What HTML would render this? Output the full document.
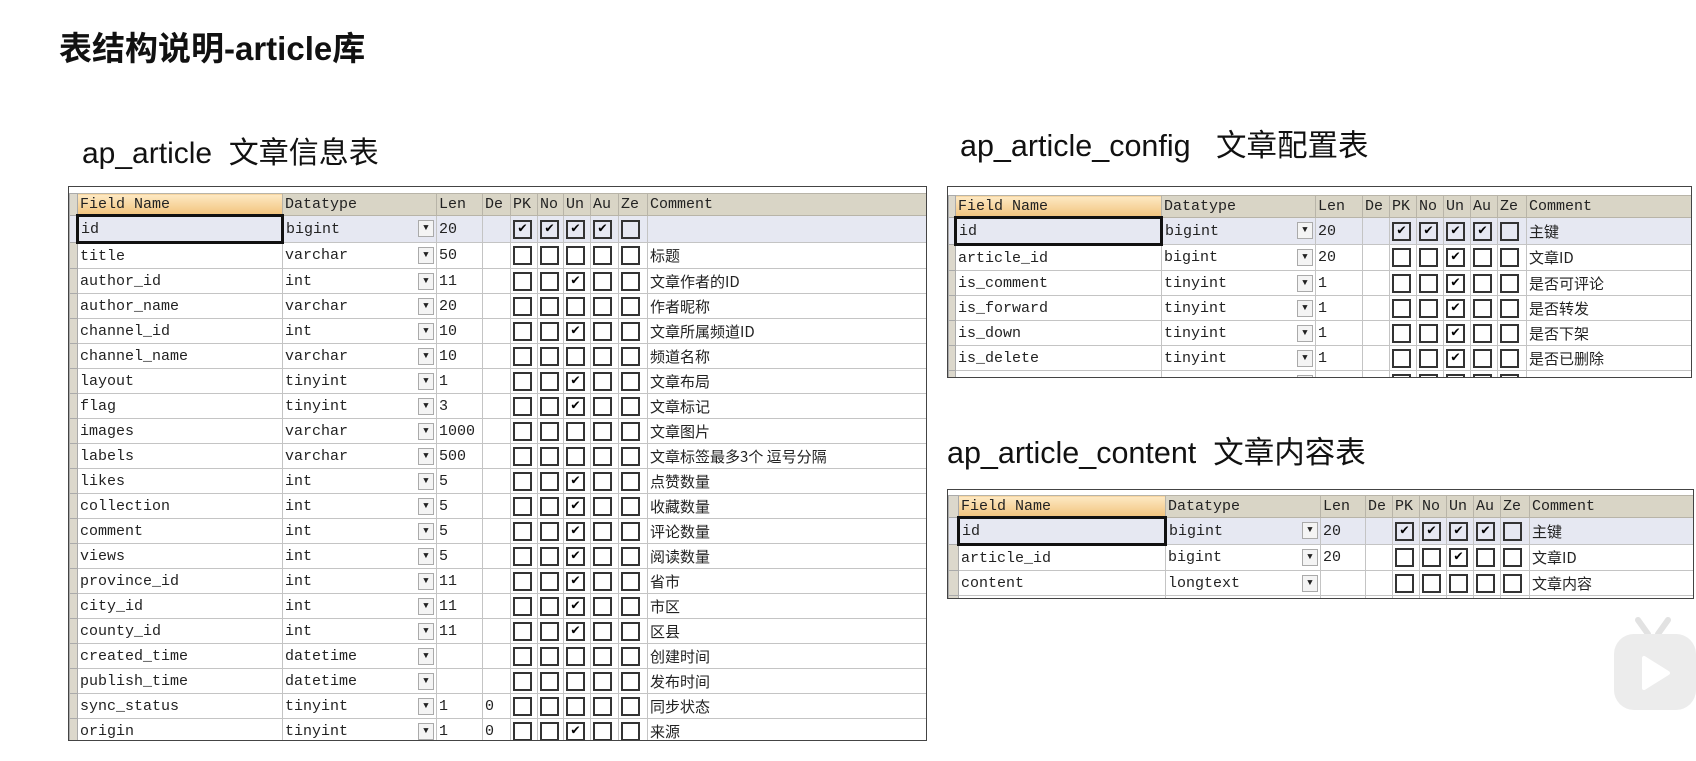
<!DOCTYPE html>
<html><head><meta charset="utf-8"><style>
body{margin:0;width:1696px;height:761px;background:#fff;position:relative;overflow:hidden;font-family:"Liberation Sans","Noto Sans CJK SC",sans-serif}
.t{position:absolute;white-space:nowrap;color:#111}
.w{position:absolute;border:1px solid #444;overflow:hidden;background:#fff}
table{border-collapse:collapse;table-layout:fixed;font:15px "Liberation Mono","Noto Sans CJK SC",monospace;color:#222;margin-top:6px}
td,th{border:1px solid #c4c4c4;height:24px;padding:0 2px;white-space:nowrap;overflow:hidden;text-align:left;font-weight:normal}
th{height:20px;background:#d9d5c6;border-color:#b8b4a8}
th.fn{background:linear-gradient(#fde9c4,#f2c47e)}
td.m,th.m{background:#dcd8cc;padding:0;border-color:#aaa}
tr.s td{background:#e6e8f2}
tr.s td.f{border:3px solid #111}
td.d{position:relative}
.ar{position:absolute;right:2px;top:4px;width:14px;height:15px;border:1px solid #aaa;background:#f4f4f4;font-size:9px;line-height:15px;text-align:center}
td.c{padding:0 0 0 2px}
.cb{display:inline-block;width:19px;height:19px;border:2px solid #333;box-sizing:border-box;vertical-align:middle;font-size:14px;line-height:15px;text-align:center;color:#000}
.cm{font-family:"Noto Sans CJK SC","Liberation Mono",monospace;font-size:15px}
</style></head><body>
<div class="t" style="left:59px;top:22px;font-size:33px;font-weight:bold">表结构说明-article库</div>
<div class="t" style="left:82px;top:128px;font-size:30px">ap_article&nbsp; 文章信息表</div>
<div class="t" style="left:960px;top:121px;font-size:30.5px">ap_article_config &nbsp; 文章配置表</div>
<div class="t" style="left:947px;top:428px;font-size:30.5px">ap_article_content&nbsp; 文章内容表</div>

<div class="w" style="left:68px;top:186px;width:857px;height:553px">
<table style="width:858px">
<colgroup><col style="width:8px"><col style="width:205px"><col style="width:154px"><col style="width:46px"><col style="width:28px"><col style="width:27px"><col style="width:26px"><col style="width:27px"><col style="width:28px"><col style="width:29px"><col></colgroup>
<tr><th class="m"></th><th class="fn">Field Name</th><th>Datatype</th><th>Len</th><th>De</th><th>PK</th><th>No</th><th>Un</th><th>Au</th><th>Ze</th><th>Comment</th></tr>
<tr class="s"><td class="m"></td><td class="f">id</td><td class="d">bigint<span class="ar">▼</span></td><td>20</td><td></td><td class="c"><span class="cb">✔</span></td><td class="c"><span class="cb">✔</span></td><td class="c"><span class="cb">✔</span></td><td class="c"><span class="cb">✔</span></td><td class="c"><span class="cb"></span></td><td class="cm"></td></tr>
<tr><td class="m"></td><td class="f">title</td><td class="d">varchar<span class="ar">▼</span></td><td>50</td><td></td><td class="c"><span class="cb"></span></td><td class="c"><span class="cb"></span></td><td class="c"><span class="cb"></span></td><td class="c"><span class="cb"></span></td><td class="c"><span class="cb"></span></td><td class="cm">标题</td></tr>
<tr><td class="m"></td><td class="f">author_id</td><td class="d">int<span class="ar">▼</span></td><td>11</td><td></td><td class="c"><span class="cb"></span></td><td class="c"><span class="cb"></span></td><td class="c"><span class="cb">✔</span></td><td class="c"><span class="cb"></span></td><td class="c"><span class="cb"></span></td><td class="cm">文章作者的ID</td></tr>
<tr><td class="m"></td><td class="f">author_name</td><td class="d">varchar<span class="ar">▼</span></td><td>20</td><td></td><td class="c"><span class="cb"></span></td><td class="c"><span class="cb"></span></td><td class="c"><span class="cb"></span></td><td class="c"><span class="cb"></span></td><td class="c"><span class="cb"></span></td><td class="cm">作者昵称</td></tr>
<tr><td class="m"></td><td class="f">channel_id</td><td class="d">int<span class="ar">▼</span></td><td>10</td><td></td><td class="c"><span class="cb"></span></td><td class="c"><span class="cb"></span></td><td class="c"><span class="cb">✔</span></td><td class="c"><span class="cb"></span></td><td class="c"><span class="cb"></span></td><td class="cm">文章所属频道ID</td></tr>
<tr><td class="m"></td><td class="f">channel_name</td><td class="d">varchar<span class="ar">▼</span></td><td>10</td><td></td><td class="c"><span class="cb"></span></td><td class="c"><span class="cb"></span></td><td class="c"><span class="cb"></span></td><td class="c"><span class="cb"></span></td><td class="c"><span class="cb"></span></td><td class="cm">频道名称</td></tr>
<tr><td class="m"></td><td class="f">layout</td><td class="d">tinyint<span class="ar">▼</span></td><td>1</td><td></td><td class="c"><span class="cb"></span></td><td class="c"><span class="cb"></span></td><td class="c"><span class="cb">✔</span></td><td class="c"><span class="cb"></span></td><td class="c"><span class="cb"></span></td><td class="cm">文章布局</td></tr>
<tr><td class="m"></td><td class="f">flag</td><td class="d">tinyint<span class="ar">▼</span></td><td>3</td><td></td><td class="c"><span class="cb"></span></td><td class="c"><span class="cb"></span></td><td class="c"><span class="cb">✔</span></td><td class="c"><span class="cb"></span></td><td class="c"><span class="cb"></span></td><td class="cm">文章标记</td></tr>
<tr><td class="m"></td><td class="f">images</td><td class="d">varchar<span class="ar">▼</span></td><td>1000</td><td></td><td class="c"><span class="cb"></span></td><td class="c"><span class="cb"></span></td><td class="c"><span class="cb"></span></td><td class="c"><span class="cb"></span></td><td class="c"><span class="cb"></span></td><td class="cm">文章图片</td></tr>
<tr><td class="m"></td><td class="f">labels</td><td class="d">varchar<span class="ar">▼</span></td><td>500</td><td></td><td class="c"><span class="cb"></span></td><td class="c"><span class="cb"></span></td><td class="c"><span class="cb"></span></td><td class="c"><span class="cb"></span></td><td class="c"><span class="cb"></span></td><td class="cm">文章标签最多3个 逗号分隔</td></tr>
<tr><td class="m"></td><td class="f">likes</td><td class="d">int<span class="ar">▼</span></td><td>5</td><td></td><td class="c"><span class="cb"></span></td><td class="c"><span class="cb"></span></td><td class="c"><span class="cb">✔</span></td><td class="c"><span class="cb"></span></td><td class="c"><span class="cb"></span></td><td class="cm">点赞数量</td></tr>
<tr><td class="m"></td><td class="f">collection</td><td class="d">int<span class="ar">▼</span></td><td>5</td><td></td><td class="c"><span class="cb"></span></td><td class="c"><span class="cb"></span></td><td class="c"><span class="cb">✔</span></td><td class="c"><span class="cb"></span></td><td class="c"><span class="cb"></span></td><td class="cm">收藏数量</td></tr>
<tr><td class="m"></td><td class="f">comment</td><td class="d">int<span class="ar">▼</span></td><td>5</td><td></td><td class="c"><span class="cb"></span></td><td class="c"><span class="cb"></span></td><td class="c"><span class="cb">✔</span></td><td class="c"><span class="cb"></span></td><td class="c"><span class="cb"></span></td><td class="cm">评论数量</td></tr>
<tr><td class="m"></td><td class="f">views</td><td class="d">int<span class="ar">▼</span></td><td>5</td><td></td><td class="c"><span class="cb"></span></td><td class="c"><span class="cb"></span></td><td class="c"><span class="cb">✔</span></td><td class="c"><span class="cb"></span></td><td class="c"><span class="cb"></span></td><td class="cm">阅读数量</td></tr>
<tr><td class="m"></td><td class="f">province_id</td><td class="d">int<span class="ar">▼</span></td><td>11</td><td></td><td class="c"><span class="cb"></span></td><td class="c"><span class="cb"></span></td><td class="c"><span class="cb">✔</span></td><td class="c"><span class="cb"></span></td><td class="c"><span class="cb"></span></td><td class="cm">省市</td></tr>
<tr><td class="m"></td><td class="f">city_id</td><td class="d">int<span class="ar">▼</span></td><td>11</td><td></td><td class="c"><span class="cb"></span></td><td class="c"><span class="cb"></span></td><td class="c"><span class="cb">✔</span></td><td class="c"><span class="cb"></span></td><td class="c"><span class="cb"></span></td><td class="cm">市区</td></tr>
<tr><td class="m"></td><td class="f">county_id</td><td class="d">int<span class="ar">▼</span></td><td>11</td><td></td><td class="c"><span class="cb"></span></td><td class="c"><span class="cb"></span></td><td class="c"><span class="cb">✔</span></td><td class="c"><span class="cb"></span></td><td class="c"><span class="cb"></span></td><td class="cm">区县</td></tr>
<tr><td class="m"></td><td class="f">created_time</td><td class="d">datetime<span class="ar">▼</span></td><td></td><td></td><td class="c"><span class="cb"></span></td><td class="c"><span class="cb"></span></td><td class="c"><span class="cb"></span></td><td class="c"><span class="cb"></span></td><td class="c"><span class="cb"></span></td><td class="cm">创建时间</td></tr>
<tr><td class="m"></td><td class="f">publish_time</td><td class="d">datetime<span class="ar">▼</span></td><td></td><td></td><td class="c"><span class="cb"></span></td><td class="c"><span class="cb"></span></td><td class="c"><span class="cb"></span></td><td class="c"><span class="cb"></span></td><td class="c"><span class="cb"></span></td><td class="cm">发布时间</td></tr>
<tr><td class="m"></td><td class="f">sync_status</td><td class="d">tinyint<span class="ar">▼</span></td><td>1</td><td>0</td><td class="c"><span class="cb"></span></td><td class="c"><span class="cb"></span></td><td class="c"><span class="cb"></span></td><td class="c"><span class="cb"></span></td><td class="c"><span class="cb"></span></td><td class="cm">同步状态</td></tr>
<tr><td class="m"></td><td class="f">origin</td><td class="d">tinyint<span class="ar">▼</span></td><td>1</td><td>0</td><td class="c"><span class="cb"></span></td><td class="c"><span class="cb"></span></td><td class="c"><span class="cb">✔</span></td><td class="c"><span class="cb"></span></td><td class="c"><span class="cb"></span></td><td class="cm">来源</td></tr>
</table></div>

<div class="w" style="left:947px;top:186px;width:743px;height:190px">
<table style="width:760px;margin-top:8px">
<colgroup><col style="width:7px"><col style="width:206px"><col style="width:154px"><col style="width:47px"><col style="width:27px"><col style="width:27px"><col style="width:27px"><col style="width:27px"><col style="width:27px"><col style="width:29px"><col></colgroup>
<tr><th class="m"></th><th class="fn">Field Name</th><th>Datatype</th><th>Len</th><th>De</th><th>PK</th><th>No</th><th>Un</th><th>Au</th><th>Ze</th><th>Comment</th></tr>
<tr class="s"><td class="m"></td><td class="f">id</td><td class="d">bigint<span class="ar">▼</span></td><td>20</td><td></td><td class="c"><span class="cb">✔</span></td><td class="c"><span class="cb">✔</span></td><td class="c"><span class="cb">✔</span></td><td class="c"><span class="cb">✔</span></td><td class="c"><span class="cb"></span></td><td class="cm">主键</td></tr>
<tr><td class="m"></td><td class="f">article_id</td><td class="d">bigint<span class="ar">▼</span></td><td>20</td><td></td><td class="c"><span class="cb"></span></td><td class="c"><span class="cb"></span></td><td class="c"><span class="cb">✔</span></td><td class="c"><span class="cb"></span></td><td class="c"><span class="cb"></span></td><td class="cm">文章ID</td></tr>
<tr><td class="m"></td><td class="f">is_comment</td><td class="d">tinyint<span class="ar">▼</span></td><td>1</td><td></td><td class="c"><span class="cb"></span></td><td class="c"><span class="cb"></span></td><td class="c"><span class="cb">✔</span></td><td class="c"><span class="cb"></span></td><td class="c"><span class="cb"></span></td><td class="cm">是否可评论</td></tr>
<tr><td class="m"></td><td class="f">is_forward</td><td class="d">tinyint<span class="ar">▼</span></td><td>1</td><td></td><td class="c"><span class="cb"></span></td><td class="c"><span class="cb"></span></td><td class="c"><span class="cb">✔</span></td><td class="c"><span class="cb"></span></td><td class="c"><span class="cb"></span></td><td class="cm">是否转发</td></tr>
<tr><td class="m"></td><td class="f">is_down</td><td class="d">tinyint<span class="ar">▼</span></td><td>1</td><td></td><td class="c"><span class="cb"></span></td><td class="c"><span class="cb"></span></td><td class="c"><span class="cb">✔</span></td><td class="c"><span class="cb"></span></td><td class="c"><span class="cb"></span></td><td class="cm">是否下架</td></tr>
<tr><td class="m"></td><td class="f">is_delete</td><td class="d">tinyint<span class="ar">▼</span></td><td>1</td><td></td><td class="c"><span class="cb"></span></td><td class="c"><span class="cb"></span></td><td class="c"><span class="cb">✔</span></td><td class="c"><span class="cb"></span></td><td class="c"><span class="cb"></span></td><td class="cm">是否已删除</td></tr>
<tr><td class="m"></td><td class="f"></td><td class="d"><span class="ar"></span></td><td></td><td></td><td class="c"><span class="cb"></span></td><td class="c"><span class="cb"></span></td><td class="c"><span class="cb"></span></td><td class="c"><span class="cb"></span></td><td class="c"><span class="cb"></span></td><td class="cm"></td></tr>
</table></div>

<div class="w" style="left:947px;top:489px;width:745px;height:108px">
<table style="width:760px;margin-top:5px">
<colgroup><col style="width:10px"><col style="width:207px"><col style="width:155px"><col style="width:45px"><col style="width:27px"><col style="width:27px"><col style="width:27px"><col style="width:27px"><col style="width:27px"><col style="width:29px"><col></colgroup>
<tr><th class="m"></th><th class="fn">Field Name</th><th>Datatype</th><th>Len</th><th>De</th><th>PK</th><th>No</th><th>Un</th><th>Au</th><th>Ze</th><th>Comment</th></tr>
<tr class="s"><td class="m"></td><td class="f">id</td><td class="d">bigint<span class="ar">▼</span></td><td>20</td><td></td><td class="c"><span class="cb">✔</span></td><td class="c"><span class="cb">✔</span></td><td class="c"><span class="cb">✔</span></td><td class="c"><span class="cb">✔</span></td><td class="c"><span class="cb"></span></td><td class="cm">主键</td></tr>
<tr><td class="m"></td><td class="f">article_id</td><td class="d">bigint<span class="ar">▼</span></td><td>20</td><td></td><td class="c"><span class="cb"></span></td><td class="c"><span class="cb"></span></td><td class="c"><span class="cb">✔</span></td><td class="c"><span class="cb"></span></td><td class="c"><span class="cb"></span></td><td class="cm">文章ID</td></tr>
<tr><td class="m"></td><td class="f">content</td><td class="d">longtext<span class="ar">▼</span></td><td></td><td></td><td class="c"><span class="cb"></span></td><td class="c"><span class="cb"></span></td><td class="c"><span class="cb"></span></td><td class="c"><span class="cb"></span></td><td class="c"><span class="cb"></span></td><td class="cm">文章内容</td></tr>
<tr><td class="m"></td><td class="f"></td><td class="d"></td><td></td><td></td><td class="c"><span class="cb"></span></td><td class="c"><span class="cb"></span></td><td class="c"><span class="cb"></span></td><td class="c"><span class="cb"></span></td><td class="c"><span class="cb"></span></td><td class="cm"></td></tr>
</table></div>

<svg style="position:absolute;left:1610px;top:608px" width="86" height="108" viewBox="0 0 86 108">
<path d="M28 12 L38 26 M58 12 L48 26" stroke="#e2e2e2" stroke-width="6" stroke-linecap="round"/>
<rect x="4" y="26" width="82" height="76" rx="20" fill="#ececec"/>
<path d="M34 50 L34 80 L58 65 Z" fill="#fff" stroke="#fff" stroke-width="4" stroke-linejoin="round"/>
</svg>
</body></html>
